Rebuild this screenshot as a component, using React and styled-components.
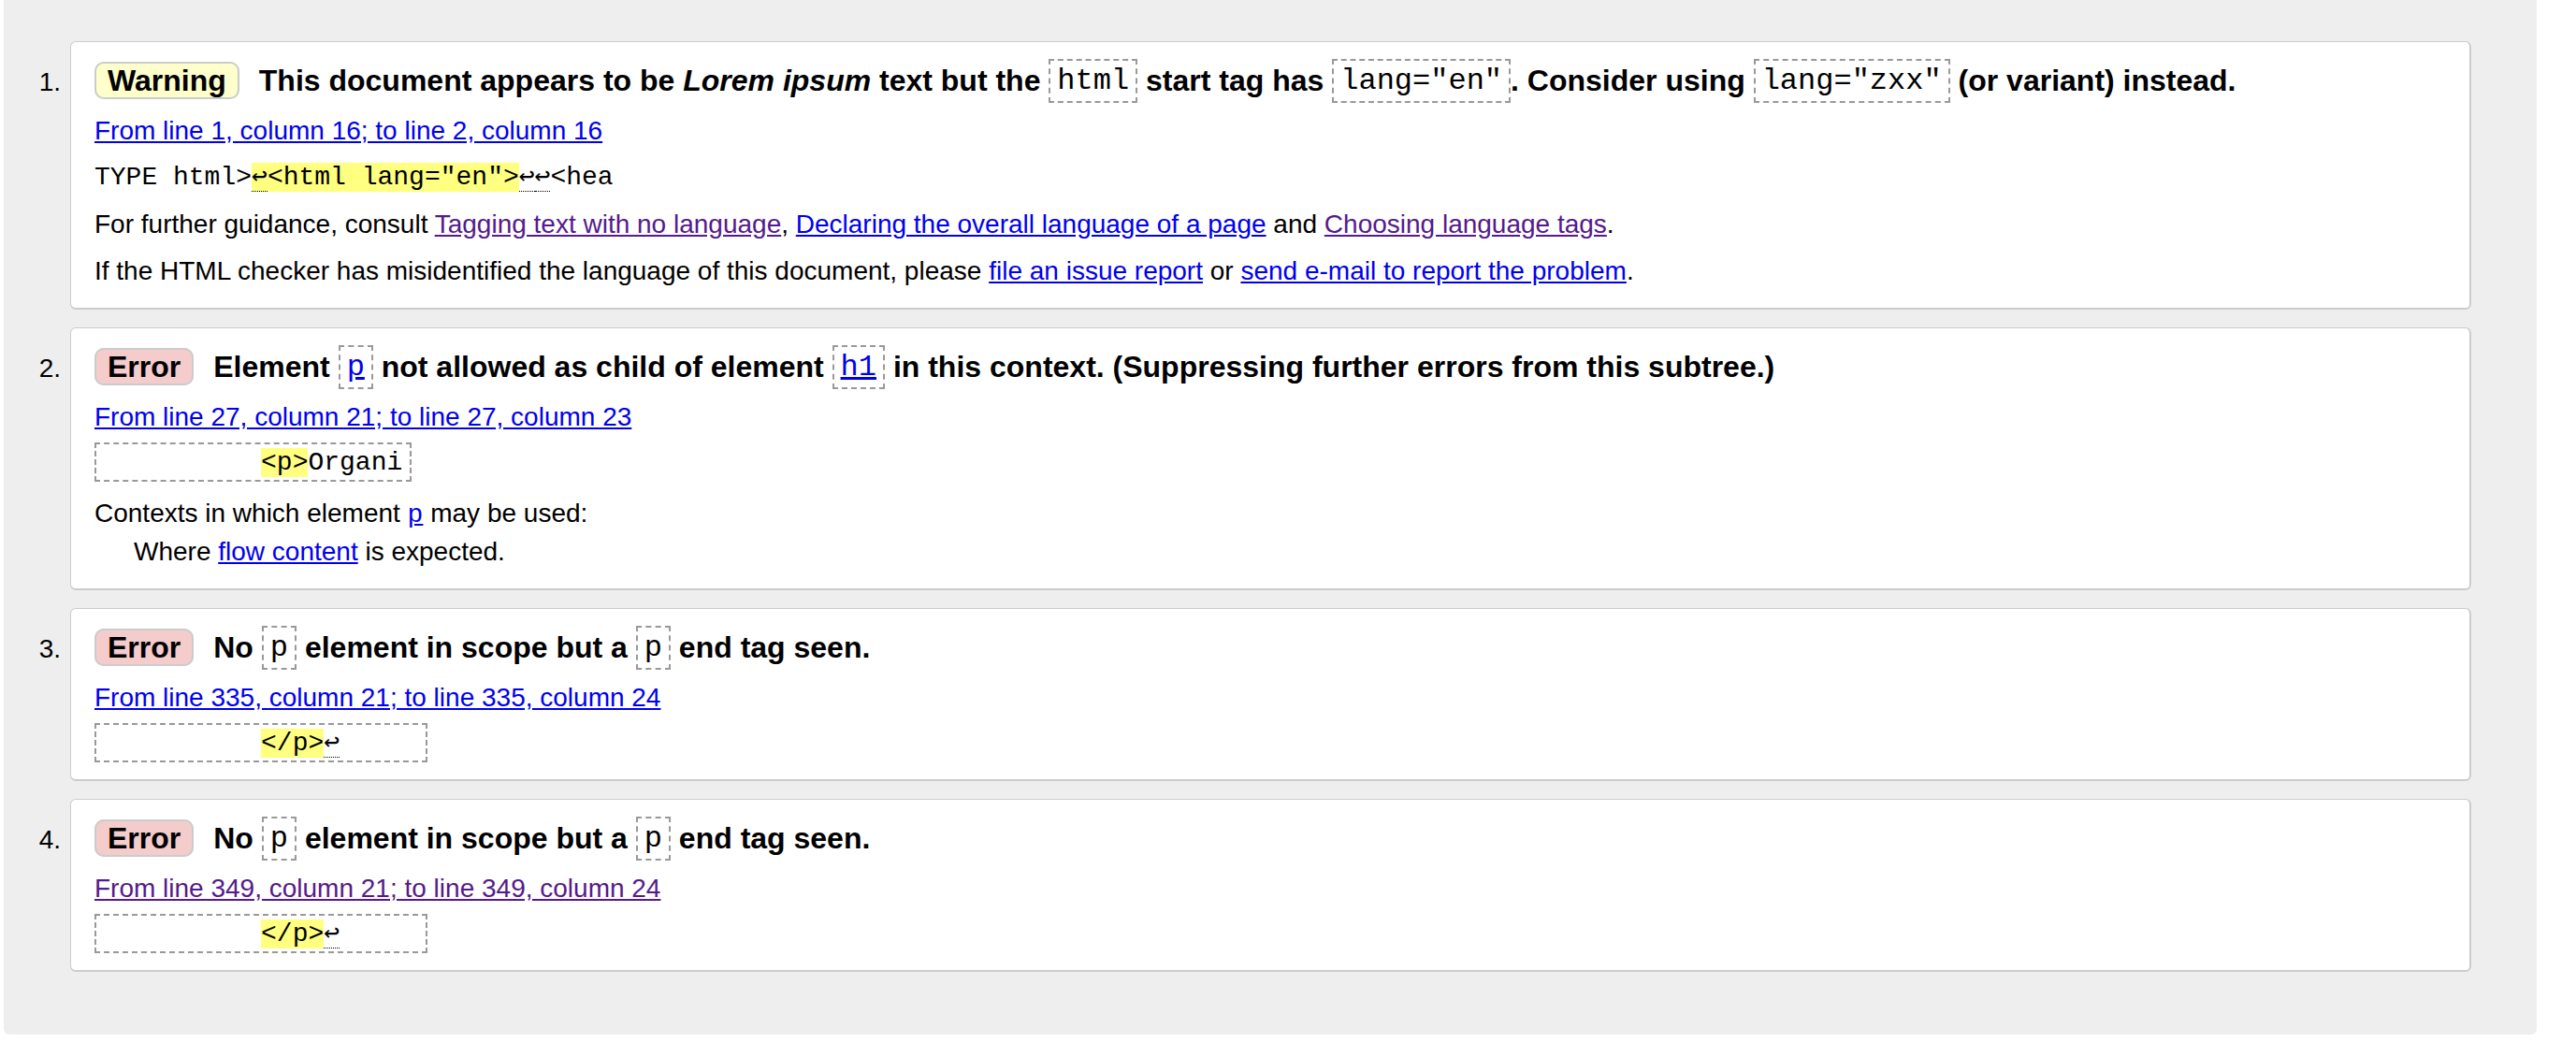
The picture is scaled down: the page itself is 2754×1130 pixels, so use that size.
import React from 'react';
import styled, { createGlobalStyle } from 'styled-components';

const Global = createGlobalStyle`
  html, body { margin: 0; padding: 0; background: #ffffff; }
  body {
    font-family: "Liberation Sans", Arial, Helvetica, sans-serif;
    color: #000000;
  }
`;

const Panel = styled.div`
  margin-left: 4px;
  width: 2708px;
  box-sizing: border-box;
  background: #eeeeee;
  border-radius: 0 0 6px 6px;
  padding: 44px 70px 67px 0;
  display: flex;
  flex-direction: column;
  gap: 19px;
`;

const Item = styled.div`
  display: flex;
  align-items: baseline;
`;

const Num = styled.div`
  flex: 0 0 61px;
  margin-right: 10px;
  text-align: right;
  font-size: 28px;
`;

const Card = styled.div`
  flex: 1;
  min-width: 0;
  background: #ffffff;
  border: 1px solid #cccccc;
  border-right-width: 2px;
  border-bottom-width: 2px;
  border-radius: 6px;
  padding: 17px 24px 22px 25px;
`;

const Title = styled.p`
  margin: 0;
  font-size: 32px;
  font-weight: bold;
  line-height: 48px;
`;

const Badge = styled.strong`
  background: ${(p) => (p.$kind === 'warning' ? '#ffffcc' : '#f4cccc')};
  border: 2px solid #cccccc;
  border-radius: 10px;
  padding: 0 12px;
  margin-right: 21px;
  line-height: 1;
`;

const Code = styled.code`
  font-family: "Liberation Mono", "Courier New", monospace;
  font-weight: normal;
  font-size: 32px;
  line-height: 1;
  vertical-align: 2px;
  border: 2px dashed #999999;
  padding: 3px 7px;
`;

const Location = styled.p`
  margin: 13px 0 0;
  font-size: 28px;
  line-height: 34px;
`;

const Para = styled.p`
  margin: 16px 0 0;
  font-size: 28px;
  line-height: 34px;
`;

const ContextsHead = styled.p`
  margin: 21px 0 0;
  font-size: 28px;
  line-height: 34px;
`;

const Link = styled.a`
  color: ${(p) => (p.$visited ? '#551a8b' : '#0000ee')};
  text-decoration: underline;
  cursor: pointer;
`;

const Extract = styled.p`
  margin: 16px 0 0;
  font-size: 28px;
  line-height: ${(p) => (p.$boxed ? '32px' : '34px')};
  white-space: pre;
`;

const ExtractCode = styled.code`
  font-family: "Liberation Mono", "Courier New", monospace;
  font-size: 28px;
  line-height: 1;
  vertical-align: 2px;
  border: ${(p) => (p.$boxed ? '2px dashed #999999' : 'none')};
  padding: ${(p) => (p.$boxed ? '4px 8px 3px' : '0')};
`;

const Mark = styled.mark`
  background: #ffff80;
  color: inherit;
`;

const LF = styled.span`
  font-family: "DejaVu Sans Mono", "Liberation Mono", monospace;
  font-size: 28px;
  line-height: 1;
  border-bottom: 1px dotted #000000;
`;

const InlineCode = styled.code`
  font-family: "Liberation Mono", "Courier New", monospace;
  font-size: 28px;
  line-height: 1;
`;

const Indented = styled.div`
  margin: 7px 0 0 42px;
  font-size: 28px;
  line-height: 34px;
`;

const Lf = () => <LF title="Line break">↩</LF>;

export default function App() {
  return (
    <>
      <Global />
      <Panel>
        <Item>
          <Num>1.</Num>
          <Card>
            <Title>
              <Badge $kind="warning">Warning</Badge>
              This document appears to be <em>Lorem ipsum</em> text but the{' '}
              <Code>html</Code> start tag has <Code>lang="en"</Code>. Consider using{' '}
              <Code>lang="zxx"</Code> (or variant) instead.
            </Title>
            <Location>
              <Link>From line 1, column 16; to line 2, column 16</Link>
            </Location>
            <Extract>
              <ExtractCode>
                {'TYPE html>'}
                <Mark>
                  <Lf />
                  {'<html lang="en">'}
                </Mark>
                <Lf />
                <Lf />
                {'<hea'}
              </ExtractCode>
            </Extract>
            <Para>
              For further guidance, consult{' '}
              <Link $visited>Tagging text with no language</Link>,{' '}
              <Link>Declaring the overall language of a page</Link> and{' '}
              <Link $visited>Choosing language tags</Link>.
            </Para>
            <Para>
              If the HTML checker has misidentified the language of this document, please{' '}
              <Link>file an issue report</Link> or <Link>send e-mail to report the problem</Link>.
            </Para>
          </Card>
        </Item>

        <Item>
          <Num>2.</Num>
          <Card>
            <Title>
              <Badge>Error</Badge>
              Element{' '}
              <Code>
                <Link>p</Link>
              </Code>{' '}
              not allowed as child of element{' '}
              <Code>
                <Link>h1</Link>
              </Code>{' '}
              in this context. (Suppressing further errors from this subtree.)
            </Title>
            <Location>
              <Link>From line 27, column 21; to line 27, column 23</Link>
            </Location>
            <Extract $boxed>
              <ExtractCode $boxed>
                {'          '}
                <Mark>{'<p>'}</Mark>
                {'Organi'}
              </ExtractCode>
            </Extract>
            <ContextsHead>
              Contexts in which element{' '}
              <InlineCode>
                <Link>p</Link>
              </InlineCode>{' '}
              may be used:
            </ContextsHead>
            <Indented>
              Where <Link>flow content</Link> is expected.
            </Indented>
          </Card>
        </Item>

        <Item>
          <Num>3.</Num>
          <Card>
            <Title>
              <Badge>Error</Badge>
              No <Code>p</Code> element in scope but a <Code>p</Code> end tag seen.
            </Title>
            <Location>
              <Link>From line 335, column 21; to line 335, column 24</Link>
            </Location>
            <Extract $boxed>
              <ExtractCode $boxed>
                {'          '}
                <Mark>{'</p>'}</Mark>
                <Lf />
                {'     '}
              </ExtractCode>
            </Extract>
          </Card>
        </Item>

        <Item>
          <Num>4.</Num>
          <Card>
            <Title>
              <Badge>Error</Badge>
              No <Code>p</Code> element in scope but a <Code>p</Code> end tag seen.
            </Title>
            <Location>
              <Link $visited>From line 349, column 21; to line 349, column 24</Link>
            </Location>
            <Extract $boxed>
              <ExtractCode $boxed>
                {'          '}
                <Mark>{'</p>'}</Mark>
                <Lf />
                {'     '}
              </ExtractCode>
            </Extract>
          </Card>
        </Item>
      </Panel>
    </>
  );
}
